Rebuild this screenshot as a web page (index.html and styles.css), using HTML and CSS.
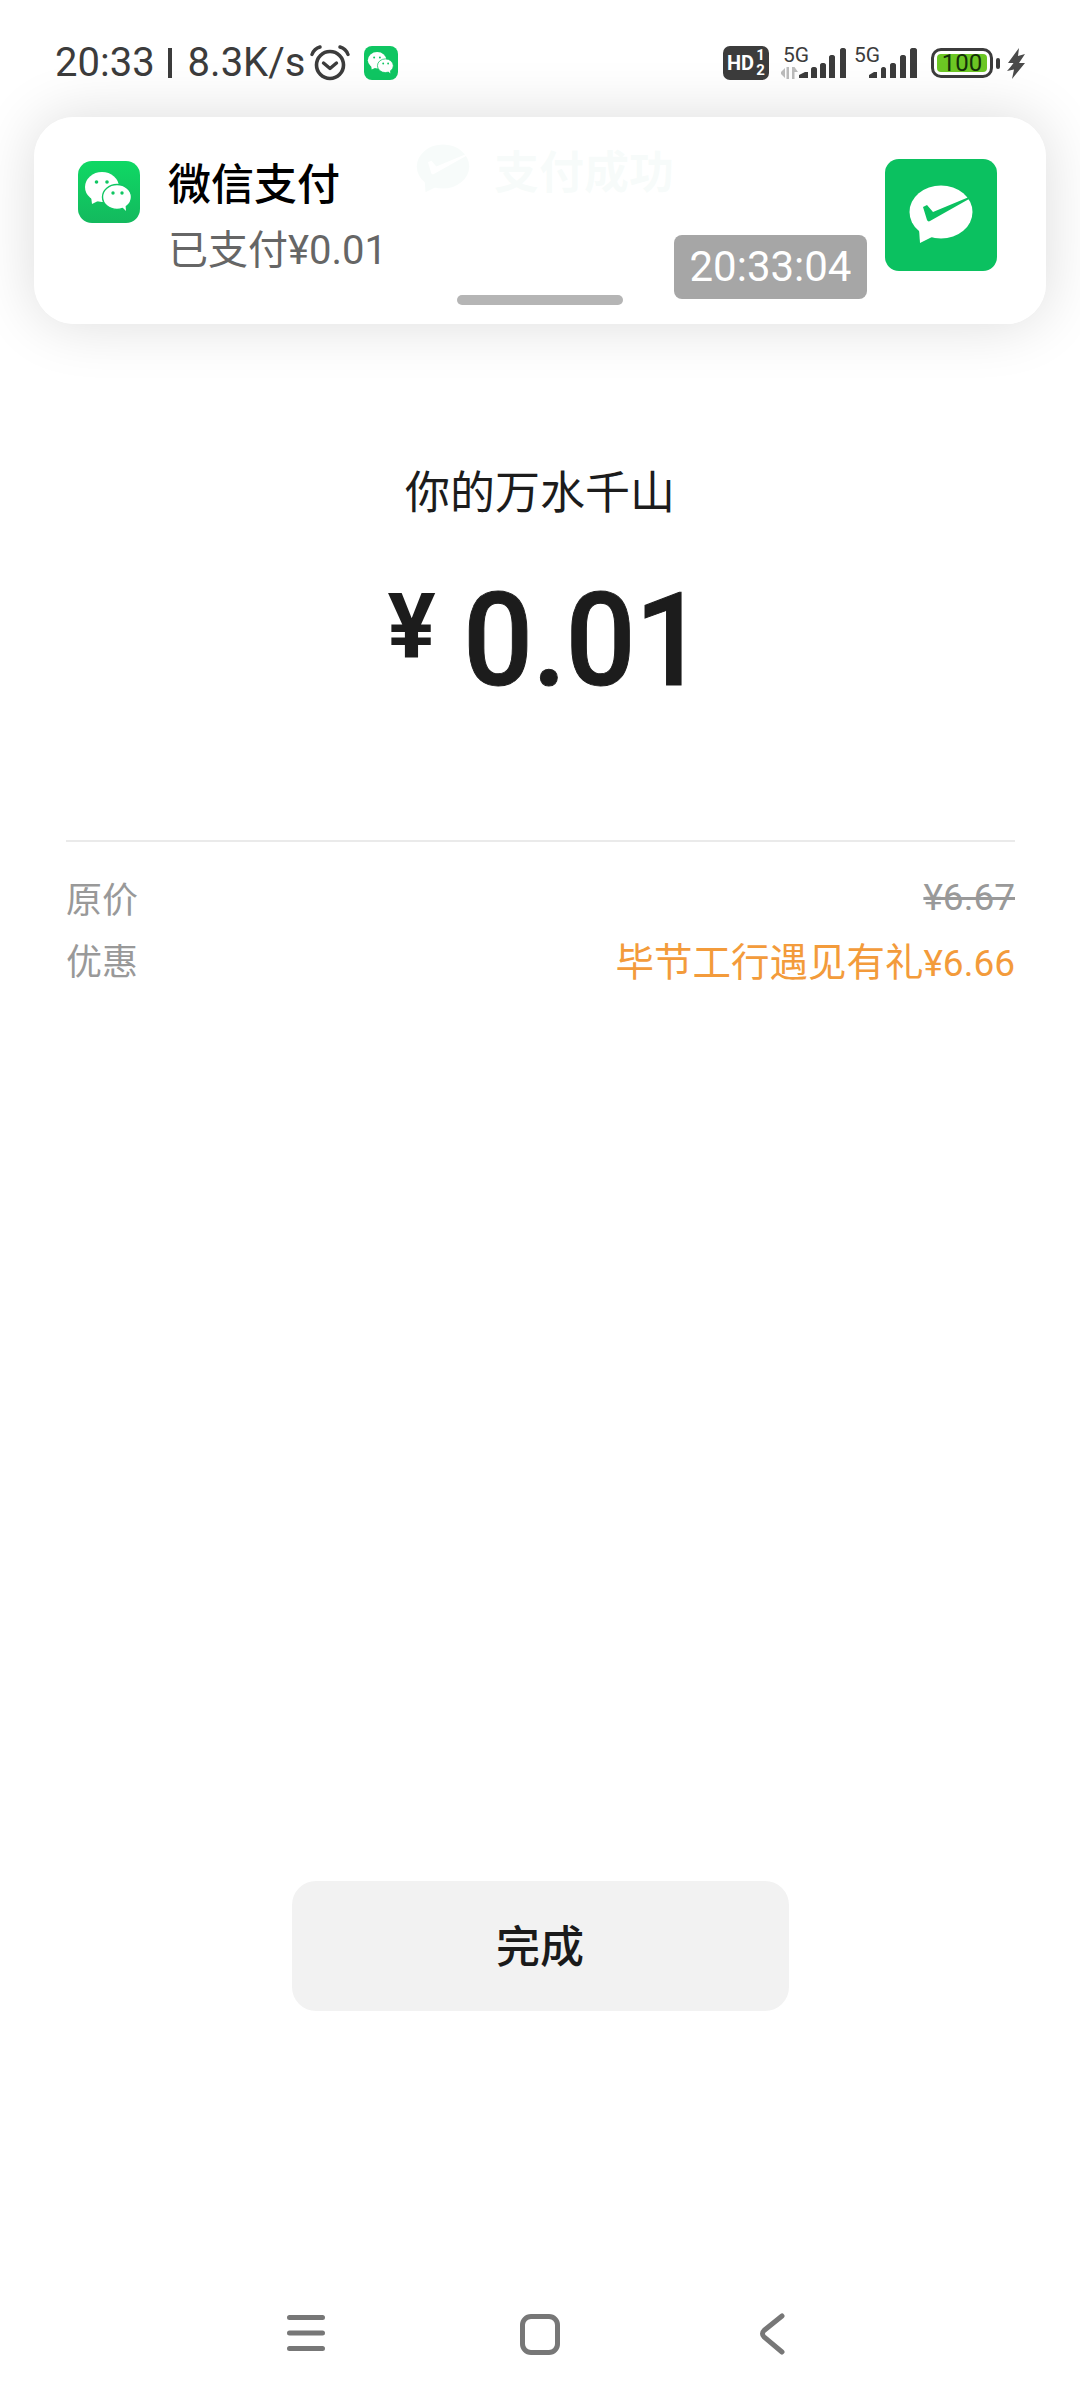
FILE: index.html
```html
<!DOCTYPE html>
<html lang="zh-CN">
<head>
  <meta charset="UTF-8">
  <meta name="viewport" content="width=device-width, initial-scale=1.0">
  <title>支付成功</title>
  <link rel="stylesheet" href="styles.css">
</head>
<body>
  <svg class="defs" width="0" height="0">
    <symbol id="wechat" viewBox="0 0 62 62">
      <ellipse cx="24" cy="26" rx="17" ry="15" fill="#fff"/>
      <path d="M13 35l1 8 8-4z" fill="#fff"/>
      <ellipse cx="39" cy="36" rx="14.500" ry="12.500" fill="#fff" stroke="#0fc662" stroke-width="1.400"/>
      <path d="M44 46l4 4-.5-6z" fill="#fff"/>
      <circle cx="18.500" cy="21" r="1.800" fill="#0fc662"/>
      <circle cx="29" cy="21" r="1.800" fill="#0fc662"/>
      <circle cx="35" cy="32" r="1.700" fill="#0fc662"/>
      <circle cx="44" cy="32" r="1.700" fill="#0fc662"/>
    </symbol>
    <symbol id="pay" viewBox="0 0 64 60">
      <ellipse cx="32" cy="27" rx="31.500" ry="26.500"/>
      <path d="M10 44l1 14 14-7z"/>
      <path class="pay-check" d="M14 22l4-2 6 7 36-15v2L21 36c-1 .7-2.400.5-3-1z"/>
    </symbol>
  </svg>

  <div class="page">
    <div class="status-bar">
      <div class="status-left">
        <span class="clock">20:33</span>
        <span class="sep"></span>
        <span class="speed">8.3K/s</span>
        <svg class="alarm" width="40" height="36" viewBox="0 0 40 36">
          <circle cx="20" cy="20" r="13.500" fill="none" stroke="#3c3c3c" stroke-width="3.600"/>
          <path d="M13.500 18l6.500 5.500 6.500-5.500" fill="none" stroke="#3c3c3c" stroke-width="3.400" stroke-linecap="round" stroke-linejoin="round"/>
          <path d="M2 9.500C3.500 5.500 6 3 10 2M38 9.500C36.500 5.500 34 3 30 2" fill="none" stroke="#3c3c3c" stroke-width="3.400" stroke-linecap="round"/>
        </svg>
        <span class="app-dot"><svg width="34" height="34"><use href="#wechat"/></svg></span>
      </div>
      <div class="status-right">
        <span class="hd">HD<span class="hd-nums"><i>1</i><i>2</i></span></span>
        <svg class="sim" width="66" height="36" viewBox="0 0 66 36">
          <text class="net" x="2" y="17">5G</text>
          <path d="M0 27l4-4v10l-4-4zM5.500 22h2.500v12H5.500zM11 22h2.500v12H11zM13.500 22l3.500 5-3.500 0z" fill="#bcbcbc"/>
          <path d="M18 33v-3l6-3h3v6zM30 33V24c0-1 1-2 2-2h2c1 0 2 1 2 2v9zM39 33V20c0-1 1-2 2-2h2c1 0 2 1 2 2v13zM48 33V12c0-1 1-2 2-2h2c1 0 2 1 2 2v21zM59 33V5c0-1 1-2 2-2h2c1 0 2 1 2 2v28z" fill="#3c3c3c"/>
        </svg>
        <svg class="sim sim-two" width="66" height="36" viewBox="0 0 66 36">
          <text class="net" x="2" y="17">5G</text>
          <path d="M17 33v-3l5-3h3v6zM29 33V24c0-1 1-2 2-2h1c1 0 2 1 2 2v9zM38 33V20c0-1 1-2 2-2h2c1 0 2 1 2 2v13zM48 33V12c0-1 1-2 2-2h2c1 0 2 1 2 2v21zM58 33V5c0-1 1-2 2-2h3c1 0 2 1 2 2v28z" fill="#3c3c3c"/>
        </svg>
        <span class="battery"><span class="battery-level">100</span></span>
        <span class="battery-tip"></span>
        <svg class="bolt" width="18" height="31" viewBox="0 0 18 31">
          <path d="M12 0L1 15h5.500L3.500 19l-3.500 4 7-1.500L5 31l13-16h-6l6-9-7 2z" fill="#4a4a4a"/>
        </svg>
      </div>
    </div>

    <div class="result-head">
      <svg class="result-logo" width="54" height="50"><use href="#pay"/></svg>
      <span>支付成功</span>
    </div>

    <div class="payee">你的万水千山</div>
    <div class="amount">
      <span class="amount-sign">¥</span>
      <span class="amount-num">0.01</span>
    </div>

    <div class="details">
      <div class="detail-row">
        <span>原价</span>
        <span class="strike">¥6.67</span>
      </div>
      <div class="detail-row">
        <span>优惠</span>
        <span class="promo">毕节工行遇见有礼<span class="promo-price">¥6.66</span></span>
      </div>
    </div>

    <div class="done-wrap">
      <button class="done-btn">完成</button>
    </div>

    <div class="nav-bar">
      <svg width="38" height="40" viewBox="0 0 38 40">
        <path d="M2.500 4.500h33M2.500 20h33M2.500 35.500h33" stroke="#777" stroke-width="5" stroke-linecap="round"/>
      </svg>
      <span class="nav-home"></span>
      <svg width="26" height="42" viewBox="0 0 26 42">
        <path d="M23 3L5 17.500c-2 1.800-2 4.500 0 6.300L23 39" fill="none" stroke="#777" stroke-width="5" stroke-linecap="round"/>
      </svg>
    </div>
  </div>

  <div class="notice">
    <span class="notice-icon"><svg width="62" height="62"><use href="#wechat"/></svg></span>
    <div class="notice-text">
      <div class="notice-title">微信支付</div>
      <div class="notice-sub">已支付¥0.01</div>
    </div>
    <span class="notice-thumb">
      <svg class="thumb-logo" width="64" height="60"><use href="#pay"/></svg>
    </span>
    <span class="notice-time">20:33:04</span>
    <span class="notice-handle"></span>
  </div>
</body>
</html>
```

FILE: styles.css
```css
* {
  box-sizing: border-box;
}

body {
  margin: 0;
  width: 1080px;
  height: 2400px;
  background-color: #fff;
  color: #1c1c1c;
  font-family: Roboto, "Noto Sans CJK SC", sans-serif;
  overflow: hidden;
  position: relative;
}

.defs {
  position: absolute;
}

.pay-check {
  fill: var(--check);
}

.page {
  height: 2400px;
  display: flex;
  flex-direction: column;
}

/* status bar */
.status-bar {
  height: 126px;
  padding: 0 55px;
  display: flex;
  justify-content: space-between;
  align-items: center;
  color: #3c3c3c;
}

.status-left,
.status-right {
  display: flex;
  align-items: center;
}

.clock,
.speed {
  font-size: 40px;
  line-height: 44px;
}

.sep {
  width: 4px;
  height: 30px;
  margin: 0 16px 0 13px;
  background-color: #3c3c3c;
}

.alarm {
  margin-left: 5px;
}

.app-dot {
  width: 34px;
  height: 34px;
  margin-left: 14px;
  border-radius: 8px;
  background-color: #0fc662;
  display: flex;
}

.hd {
  width: 46px;
  height: 34px;
  padding-left: 4px;
  border-radius: 7px;
  background-color: #3c3c3c;
  color: #fff;
  font-size: 20px;
  font-weight: 700;
  display: flex;
  align-items: center;
}

.hd-nums {
  margin-left: 2px;
  display: flex;
  flex-direction: column;
  font-size: 15px;
  line-height: 15px;
}

.hd-nums i {
  font-style: normal;
}

.sim {
  margin-left: 12px;
  overflow: visible;
}

.sim-two {
  margin-left: 5px;
}

.net {
  font-size: 21px;
  fill: #3c3c3c;
}

.battery {
  width: 62px;
  height: 30px;
  margin-left: 13px;
  padding: 3px;
  border: 3px solid #3c3c3c;
  border-radius: 10px;
  display: flex;
}

.battery-level {
  flex: 1;
  border-radius: 4px;
  background-color: #6cc724;
  color: #14300a;
  font-size: 24px;
  line-height: 18px;
  text-align: center;
}

.battery-tip {
  width: 4px;
  height: 11px;
  margin-left: 3px;
  border-radius: 2px;
  background-color: #3c3c3c;
}

.bolt {
  margin-left: 7px;
}

/* page header, covered by the notification */
.result-head {
  margin-top: 17px;
  height: 52px;
  padding-left: 416px;
  display: flex;
  align-items: center;
  gap: 24px;
  font-size: 45px;
  font-weight: 700;
  color: #3f9a78;
}

.result-logo {
  fill: #3f9a78;
  --check: #fff;
}

.payee {
  margin-top: 269px;
  font-size: 45px;
  line-height: 60px;
  text-align: center;
}

.amount {
  margin-top: 37px;
  height: 160px;
  padding-right: 10px;
  display: flex;
  justify-content: center;
  align-items: center;
}

.amount-sign {
  font-size: 90px;
  font-weight: 700;
  line-height: 100px;
  margin-top: -26px;
  width: 75px;
}

.amount-num {
  font-size: 130px;
  font-weight: 500;
  line-height: 160px;
  letter-spacing: -1px;
  -webkit-text-stroke: 1px #1c1c1c;
  display: inline-block;
  transform: scaleX(0.95);
  transform-origin: left center;
  width: 220px;
}

.details {
  margin: 119px 65px 0 66px;
  padding-top: 24px;
  border-top: 2px solid #eaeaea;
}

.detail-row {
  height: 62px;
  display: flex;
  justify-content: space-between;
  align-items: center;
  font-size: 36px;
  color: #999;
}

.strike {
  font-size: 37px;
  text-decoration: line-through;
}

.promo {
  font-size: 38.500px;
  color: #f39b3b;
}

.promo-price {
  font-size: 37px;
}

.done-wrap {
  margin-top: auto;
  display: flex;
  justify-content: center;
}

.done-btn {
  width: 497px;
  height: 130px;
  padding-bottom: 5px;
  border: none;
  border-radius: 24px;
  background-color: #f2f2f2;
  color: #1a1a1a;
  font-family: inherit;
  font-size: 44px;
  font-weight: 500;
}

.nav-bar {
  margin-top: 302px;
  height: 87px;
  padding: 0 295px 0 287px;
  display: flex;
  justify-content: space-between;
  align-items: flex-start;
}

.nav-home {
  width: 40px;
  height: 41px;
  margin: 1px 4px 0 0;
  border: 5px solid #777;
  border-radius: 11px;
}

/* heads-up notification */
.notice {
  position: absolute;
  top: 117px;
  left: 34px;
  width: 1012px;
  height: 207px;
  padding: 44px 49px 0 44px;
  border-radius: 40px;
  background-color: rgba(255, 255, 255, 0.96);
  box-shadow: 0 0 60px rgba(0, 0, 0, 0.14);
  display: flex;
  align-items: flex-start;
}

.notice-icon {
  width: 62px;
  height: 62px;
  border-radius: 14px;
  background: linear-gradient(#0fd864, #13b95e);
  display: flex;
}

.notice-text {
  flex: 1;
  margin-left: 28px;
  margin-top: -4px;
}

.notice-title {
  font-size: 43px;
  font-weight: 500;
  line-height: 56px;
  color: #000;
}

.notice-sub {
  margin-top: 12px;
  font-size: 40px;
  line-height: 52px;
  color: #666;
}

.notice-thumb {
  width: 112px;
  height: 112px;
  margin-top: -2px;
  border-radius: 14px;
  background-color: #0bc160;
  display: flex;
  align-items: center;
  justify-content: center;
}

.thumb-logo {
  fill: #fff;
  --check: #0bc160;
}

.notice-time {
  position: absolute;
  top: 118px;
  left: 640px;
  width: 193px;
  height: 64px;
  border-radius: 8px;
  background-color: #a6a6a6;
  color: #fff;
  font-size: 42px;
  line-height: 64px;
  text-align: center;
}

.notice-handle {
  position: absolute;
  top: 178px;
  left: 423px;
  width: 166px;
  height: 10px;
  border-radius: 5px;
  background-color: #b5b5b5;
}
```
